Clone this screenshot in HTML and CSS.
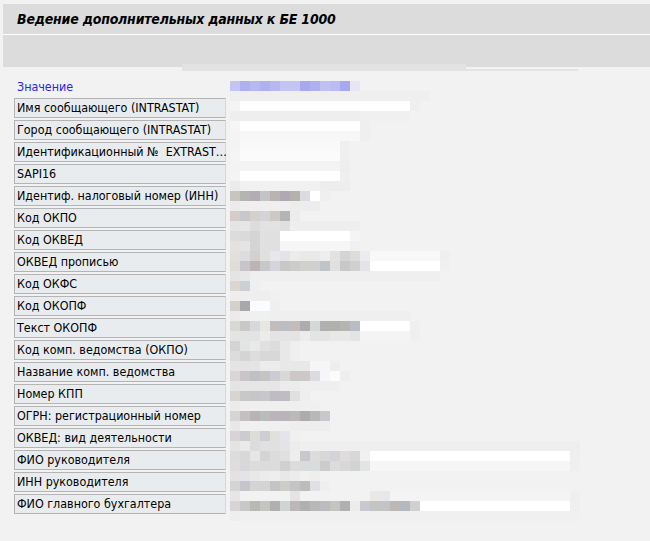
FILE: index.html
```html
<!DOCTYPE html>
<html lang="ru">
<head>
<meta charset="utf-8">
<title>Ведение дополнительных данных к БЕ 1000</title>
<link rel="stylesheet" href="styles.css">
</head>
<body>
<div class="titlebar"><h1 class="title">Ведение дополнительных данных к БЕ 1000</h1></div>
<div class="sep"></div>
<div class="toolbar"></div>
<div class="glare glare-a"></div>
<div class="glare glare-b"></div>
<main class="content">
  <div class="labels">
    <div class="head">Значение</div>
    <div class="lbl">Имя сообщающего (INTRASTAT)</div>
    <div class="lbl">Город сообщающего (INTRASTAT)</div>
    <div class="lbl">Идентификационный №&nbsp; EXTRAST…</div>
    <div class="lbl">SAPI16</div>
    <div class="lbl">Идентиф. налоговый номер (ИНН)</div>
    <div class="lbl">Код ОКПО</div>
    <div class="lbl">Код ОКВЕД</div>
    <div class="lbl">ОКВЕД прописью</div>
    <div class="lbl">Код ОКФС</div>
    <div class="lbl">Код ОКОПФ</div>
    <div class="lbl">Текст ОКОПФ</div>
    <div class="lbl">Код комп. ведомства (ОКПО)</div>
    <div class="lbl">Название комп. ведомства</div>
    <div class="lbl">Номер КПП</div>
    <div class="lbl">ОГРН: регистрационный номер</div>
    <div class="lbl">ОКВЕД: вид деятельности</div>
    <div class="lbl">ФИО руководителя</div>
    <div class="lbl">ИНН руководителя</div>
    <div class="lbl">ФИО главного бухгалтера</div>
  </div>
  <div class="values">
    <div class="strip"><i style="width:10px;background:#c4c4f4"></i><i style="width:10px;background:#b0b0f0"></i><i style="width:10px;background:#b8b8f0"></i><i style="width:10px;background:#b0b0f0"></i><i style="width:10px;background:#b8b8f0"></i><i style="width:20px;background:#c4c4f4"></i><i style="width:10px;background:#a8a8f0"></i><i style="width:10px;background:#b0b0f0"></i><i style="width:10px;background:#c0c0f4"></i><i style="width:10px;background:#bcbcf4"></i><i style="width:10px;background:#a8a8f0"></i><i style="width:10px;background:#e6e6f4"></i></div>
    <div class="strip"><i style="width:200px;background:#efefef"></i></div>
    <div class="strip"><i style="width:10px;background:#f4f4f4"></i><i style="width:170px;background:#fff"></i><i style="width:10px;background:#efefef"></i></div>
    <div class="strip"><i style="width:130px;background:#eeeeee"></i><i style="width:50px;background:#f0f0f0"></i></div>
    <div class="strip"><i style="width:10px;background:#f6f6f6"></i><i style="width:120px;background:#fff"></i><i style="width:10px;background:#efefef"></i></div>
    <div class="strip"><i style="width:10px;background:#f4f4f4"></i><i style="width:120px;background:#f7f7f7"></i><i style="width:10px;background:#efefef"></i></div>
    <div class="strip"><i style="width:10px;background:#f3f3f3"></i><i style="width:100px;background:#f9f9f9"></i><i style="width:10px;background:#efefef"></i></div>
    <div class="strip"><i style="width:10px;background:#f5f5f5"></i><i style="width:100px;background:#fbfbfb"></i><i style="width:10px;background:#efefef"></i></div>
    <div class="strip"><i style="width:110px;background:#f3f3f3"></i><i style="width:10px;background:#eeeeee"></i></div>
    <div class="strip"><i style="width:10px;background:#f4f4f4"></i><i style="width:100px;background:#fff"></i><i style="width:10px;background:#efefef"></i></div>
    <div class="strip"><i style="width:10px;background:#ebebeb"></i><i style="width:80px;background:#f1f1f1"></i><i style="width:30px;background:#ededed"></i></div>
    <div class="strip"><i style="width:10px;background:#c8c4c0"></i><i style="width:10px;background:#b4b4b0"></i><i style="width:10px;background:#b4acb4"></i><i style="width:10px;background:#c4c4c8"></i><i style="width:10px;background:#b8b4b0"></i><i style="width:10px;background:#b0a8b4"></i><i style="width:10px;background:#b4b0ac"></i><i style="width:10px;background:#dcdce0"></i><i style="width:10px;background:#fff"></i><i style="width:10px;background:#efefef"></i></div>
    <div class="strip"><i style="width:10px;background:#ebebeb"></i><i style="width:50px;background:#efefef"></i><i style="width:30px;background:#ededed"></i></div>
    <div class="strip"><i style="width:10px;background:#d4ccc8"></i><i style="width:10px;background:#c8c8cc"></i><i style="width:10px;background:#d4d0cc"></i><i style="width:10px;background:#d4d4d8"></i><i style="width:10px;background:#ccc8c4"></i><i style="width:10px;background:#b4b4b4"></i><i style="width:10px;background:#ececec"></i></div>
    <div class="strip"><i style="width:10px;background:#e4e4e4"></i><i style="width:10px;background:#e6e6e6"></i><i style="width:10px;background:#dcdcdc"></i><i style="width:20px;background:#e2e2e2"></i><i style="width:10px;background:#e0e0e0"></i><i style="width:70px;background:#eeeeee"></i></div>
    <div class="strip"><i style="width:10px;background:#dedcda"></i><i style="width:10px;background:#dadada"></i><i style="width:10px;background:#d4d4d4"></i><i style="width:20px;background:#e0e0e0"></i><i style="width:70px;background:#fff"></i><i style="width:10px;background:#f4f4f4"></i></div>
    <div class="strip"><i style="width:10px;background:#e4e2e0"></i><i style="width:10px;background:#e4e4e4"></i><i style="width:10px;background:#d4d4d4"></i><i style="width:20px;background:#e0e0e0"></i><i style="width:70px;background:#f6f6f6"></i><i style="width:10px;background:#f0f0f0"></i></div>
    <div class="strip"><i style="width:10px;background:#e2e0dc"></i><i style="width:10px;background:#dcdce0"></i><i style="width:10px;background:#d4d0d0"></i><i style="width:10px;background:#e0e0dc"></i><i style="width:10px;background:#e8e8ec"></i><i style="width:10px;background:#e4e4e8"></i><i style="width:10px;background:#ecece8"></i><i style="width:20px;background:#e8eaea"></i><i style="width:10px;background:#eeeeee"></i><i style="width:10px;background:#e4e2e0"></i><i style="width:10px;background:#d4d4d4"></i><i style="width:10px;background:#dcdcd8"></i><i style="width:10px;background:#ececf0"></i><i style="width:70px;background:#f8f8f8"></i><i style="width:10px;background:#efefef"></i></div>
    <div class="strip"><i style="width:10px;background:#e0dcd8"></i><i style="width:10px;background:#c8c4c8"></i><i style="width:10px;background:#bcb4b4"></i><i style="width:10px;background:#c8c8c8"></i><i style="width:10px;background:#d4d4dc"></i><i style="width:10px;background:#c8c8c8"></i><i style="width:10px;background:#cccccc"></i><i style="width:10px;background:#d0d0cc"></i><i style="width:10px;background:#d0d0d0"></i><i style="width:10px;background:#c0c4c8"></i><i style="width:10px;background:#e0e0e0"></i><i style="width:10px;background:#c8c8c8"></i><i style="width:10px;background:#d0d0d0"></i><i style="width:10px;background:#e4e4e8"></i><i style="width:70px;background:#fff"></i><i style="width:10px;background:#f0f0f0"></i></div>
    <div class="strip"><i style="width:10px;background:#e4e4e4"></i><i style="width:10px;background:#e8e8e8"></i><i style="width:190px;background:#efefef"></i></div>
    <div class="strip"><i style="width:10px;background:#dcd6d2"></i><i style="width:10px;background:#ccd0d4"></i><i style="width:10px;background:#efefef"></i></div>
    <div class="strip"><i style="width:40px;background:#eeeeee"></i><i style="width:10px;background:#f0f0f0"></i></div>
    <div class="strip"><i style="width:10px;background:#d4d0cc"></i><i style="width:10px;background:#a8a8ac"></i><i style="width:20px;background:#fafcff"></i><i style="width:10px;background:#efefef"></i></div>
    <div class="strip"><i style="width:10px;background:#ebebeb"></i><i style="width:30px;background:#f0f0f0"></i><i style="width:140px;background:#efefef"></i></div>
    <div class="strip"><i style="width:10px;background:#d8d8d4"></i><i style="width:10px;background:#c8c8c4"></i><i style="width:10px;background:#d8d8dc"></i><i style="width:10px;background:#e6e6e2"></i><i style="width:10px;background:#c4bcbc"></i><i style="width:10px;background:#bcbcc4"></i><i style="width:10px;background:#c4bcbc"></i><i style="width:10px;background:#acacac"></i><i style="width:10px;background:#d4d8d8"></i><i style="width:10px;background:#b0b0b0"></i><i style="width:10px;background:#b0b0ac"></i><i style="width:10px;background:#b4b4b0"></i><i style="width:10px;background:#b8bcc4"></i><i style="width:50px;background:#fff"></i><i style="width:10px;background:#efefef"></i></div>
    <div class="strip"><i style="width:10px;background:#e4e4e4"></i><i style="width:20px;background:#e2e4e4"></i><i style="width:10px;background:#ececec"></i><i style="width:30px;background:#e4e4e4"></i><i style="width:10px;background:#ececec"></i><i style="width:20px;background:#e4e4e4"></i><i style="width:20px;background:#e8e8e8"></i><i style="width:10px;background:#e4e4e4"></i><i style="width:50px;background:#f4f4f4"></i><i style="width:10px;background:#efefef"></i></div>
    <div class="strip"><i style="width:10px;background:#d4d4d4"></i><i style="width:10px;background:#e4e4e4"></i><i style="width:10px;background:#e8eaea"></i><i style="width:10px;background:#e0e0e0"></i><i style="width:10px;background:#dcdcdc"></i><i style="width:10px;background:#e8e8e8"></i><i style="width:10px;background:#efefef"></i></div>
    <div class="strip"><i style="width:10px;background:#dcdcdc"></i><i style="width:10px;background:#d4d4d4"></i><i style="width:10px;background:#dcdede"></i><i style="width:20px;background:#d8d8d8"></i><i style="width:10px;background:#e8e8e8"></i><i style="width:10px;background:#efefef"></i></div>
    <div class="strip"><i style="width:30px;background:#e4e4e4"></i><i style="width:20px;background:#ececec"></i><i style="width:30px;background:#e8e8e8"></i><i style="width:20px;background:#f6f6f6"></i><i style="width:10px;background:#eeeeee"></i></div>
    <div class="strip"><i style="width:10px;background:#dad6d4"></i><i style="width:10px;background:#c8c4c8"></i><i style="width:10px;background:#c0c0c4"></i><i style="width:10px;background:#c4c4c4"></i><i style="width:10px;background:#ccccd4"></i><i style="width:10px;background:#d8d8d8"></i><i style="width:20px;background:#ccc8c8"></i><i style="width:10px;background:#dcdce0"></i><i style="width:10px;background:#f4f6fa"></i><i style="width:10px;background:#fcfcfc"></i><i style="width:10px;background:#eeeeee"></i></div>
    <div class="strip"><i style="width:10px;background:#e4e4e4"></i><i style="width:40px;background:#e6e6e6"></i><i style="width:20px;background:#ececec"></i><i style="width:40px;background:#efefef"></i></div>
    <div class="strip"><i style="width:10px;background:#d8d4d0"></i><i style="width:10px;background:#c8c8c8"></i><i style="width:10px;background:#c8c4c8"></i><i style="width:10px;background:#c8c8cc"></i><i style="width:20px;background:#c0bcc4"></i><i style="width:10px;background:#e0e0e0"></i><i style="width:10px;background:#eeeeee"></i></div>
    <div class="strip"><i style="width:10px;background:#ebebeb"></i><i style="width:60px;background:#efefef"></i><i style="width:20px;background:#f0f0f0"></i></div>
    <div class="strip"><i style="width:10px;background:#d8d4d4"></i><i style="width:10px;background:#c4c0c0"></i><i style="width:10px;background:#b8b4b4"></i><i style="width:10px;background:#b8bcbc"></i><i style="width:10px;background:#bcb4bc"></i><i style="width:10px;background:#b8b4b8"></i><i style="width:10px;background:#bcb8b8"></i><i style="width:10px;background:#acacac"></i><i style="width:10px;background:#b8b8b8"></i><i style="width:10px;background:#c8c8cc"></i></div>
    <div class="strip"><i style="width:10px;background:#e8e8e8"></i><i style="width:50px;background:#f0f0f0"></i><i style="width:40px;background:#eeeeee"></i></div>
    <div class="strip"><i style="width:10px;background:#d8d4d4"></i><i style="width:10px;background:#ccccd0"></i><i style="width:10px;background:#dcdcd8"></i><i style="width:10px;background:#d0ccd4"></i><i style="width:10px;background:#e0e0dc"></i><i style="width:10px;background:#e4e4ec"></i><i style="width:10px;background:#f0f0f0"></i></div>
    <div class="strip"><i style="width:10px;background:#e4e4e4"></i><i style="width:10px;background:#eaeaea"></i><i style="width:10px;background:#dcdcdc"></i><i style="width:20px;background:#e0e0e0"></i><i style="width:10px;background:#e4e4e8"></i><i style="width:10px;background:#ececec"></i><i style="width:270px;background:#efefef"></i><i style="width:10px;background:#eeeeee"></i></div>
    <div class="strip"><i style="width:10px;background:#dcdcdc"></i><i style="width:10px;background:#d8d8d8"></i><i style="width:10px;background:#e6e6e6"></i><i style="width:10px;background:#d4d4d4"></i><i style="width:10px;background:#dcdcdc"></i><i style="width:10px;background:#e0e0e0"></i><i style="width:10px;background:#eeeeee"></i><i style="width:10px;background:#c8c8cc"></i><i style="width:10px;background:#dcdcdc"></i><i style="width:10px;background:#d8d8d8"></i><i style="width:10px;background:#d4d4d8"></i><i style="width:10px;background:#e0dcdc"></i><i style="width:10px;background:#d8d8d8"></i><i style="width:10px;background:#f0f0f0"></i><i style="width:200px;background:#fff"></i><i style="width:10px;background:#efefef"></i></div>
    <div class="strip"><i style="width:10px;background:#e0dcdc"></i><i style="width:10px;background:#d8d8dc"></i><i style="width:30px;background:#dcdcdc"></i><i style="width:10px;background:#d0d0d0"></i><i style="width:10px;background:#dcdcdc"></i><i style="width:20px;background:#d8dcdc"></i><i style="width:10px;background:#cccccc"></i><i style="width:10px;background:#dcdcdc"></i><i style="width:10px;background:#d8d8d8"></i><i style="width:10px;background:#d0d4d4"></i><i style="width:10px;background:#e4e4e4"></i><i style="width:200px;background:#f6f6f6"></i><i style="width:10px;background:#efefef"></i></div>
    <div class="strip"><i style="width:10px;background:#e4e2e0"></i><i style="width:10px;background:#e4e4e8"></i><i style="width:10px;background:#e8e8e8"></i><i style="width:10px;background:#ececec"></i><i style="width:10px;background:#eeeeee"></i><i style="width:10px;background:#e8e8e8"></i><i style="width:10px;background:#ececec"></i><i style="width:10px;background:#f0f2f0"></i><i style="width:10px;background:#eeeeee"></i></div>
    <div class="strip"><i style="width:10px;background:#d4d4d4"></i><i style="width:10px;background:#c8c4cc"></i><i style="width:20px;background:#d4d4d4"></i><i style="width:10px;background:#c4c4c4"></i><i style="width:10px;background:#ccccc8"></i><i style="width:10px;background:#c4c4c4"></i><i style="width:10px;background:#bcbcbc"></i><i style="width:10px;background:#e0e0e4"></i><i style="width:10px;background:#efefef"></i></div>
    <div class="strip"><i style="width:10px;background:#e8e6e4"></i><i style="width:50px;background:#f2f2f2"></i><i style="width:10px;background:#e4e4e4"></i><i style="width:70px;background:#f2f2f2"></i><i style="width:10px;background:#ece8e4"></i><i style="width:10px;background:#e8e8ec"></i><i style="width:180px;background:#f4f4f4"></i><i style="width:10px;background:#efefef"></i></div>
    <div class="strip"><i style="width:10px;background:#d8d4d4"></i><i style="width:10px;background:#c8c8c8"></i><i style="width:10px;background:#b8b8b4"></i><i style="width:10px;background:#c4c4c0"></i><i style="width:10px;background:#b0b0b0"></i><i style="width:10px;background:#d0d4d4"></i><i style="width:10px;background:#bcb8b8"></i><i style="width:10px;background:#b0b0b0"></i><i style="width:10px;background:#b8b8b8"></i><i style="width:10px;background:#bcbcc0"></i><i style="width:10px;background:#c4c4c0"></i><i style="width:10px;background:#b0b0b0"></i><i style="width:10px;background:#ececec"></i><i style="width:10px;background:#c8c8d0"></i><i style="width:20px;background:#c4c4c4"></i><i style="width:10px;background:#bcb8b8"></i><i style="width:10px;background:#b4b8c0"></i><i style="width:10px;background:#d0d0d0"></i><i style="width:150px;background:#fff"></i><i style="width:10px;background:#efefef"></i></div>
    <div class="strip"><i style="width:10px;background:#eeeeee"></i><i style="width:340px;background:#f0f0f0"></i></div>
  </div>
</main>
</body>
</html>
```

FILE: styles.css
```css
html, body {
  margin: 0;
  padding: 0;
  background: #f2f2f2;
}

body {
  font-family: "DejaVu Sans Condensed", "DejaVu Sans", sans-serif;
  position: relative;
  width: 650px;
  height: 541px;
  overflow: hidden;
}

.titlebar {
  margin: 4px 0 0 3px;
  height: 30px;
  background: #dcdcdc;
  display: flex;
  align-items: center;
  padding-left: 14px;
}

.title {
  margin: 0;
  font-size: 14px;
  font-weight: bold;
  font-style: italic;
  letter-spacing: -0.2px;
  color: #000;
  line-height: 18px;
}

.sep {
  height: 1px;
  margin-left: 3px;
  background: #ffffff;
}

.toolbar {
  height: 32px;
  margin-left: 3px;
  background: #dcdcdc;
}

.glare {
  position: absolute;
  background: #e3e3e3;
}

.glare-a {
  left: 182px;
  top: 64px;
  width: 284px;
  height: 7px;
}

.glare-b {
  left: 226px;
  top: 69px;
  width: 352px;
  height: 2px;
}

.content {
  display: flex;
  gap: 4px;
  margin-top: 11px;
  padding-left: 14px;
}

.labels {
  width: 212px;
  display: flex;
  flex-direction: column;
}

.head {
  height: 20px;
  line-height: 18px;
  padding-left: 3px;
  font-size: 12.4px;
  color: #2626f0;
}

.lbl {
  box-sizing: border-box;
  height: 20px;
  margin-bottom: 2px;
  line-height: 18px;
  padding-left: 2px;
  padding-right: 1px;
  font-size: 12.4px;
  color: #000;
  background: #e8ecef;
  border: 1px solid #b4b4b4;
  border-right-color: #d4d8dc;
  white-space: pre;
}

.values {
  margin-top: 3px;
  display: flex;
  flex-direction: column;
}

.strip {
  display: flex;
  height: 10px;
}

.strip i {
  display: block;
  height: 10px;
  flex: none;
}
```
